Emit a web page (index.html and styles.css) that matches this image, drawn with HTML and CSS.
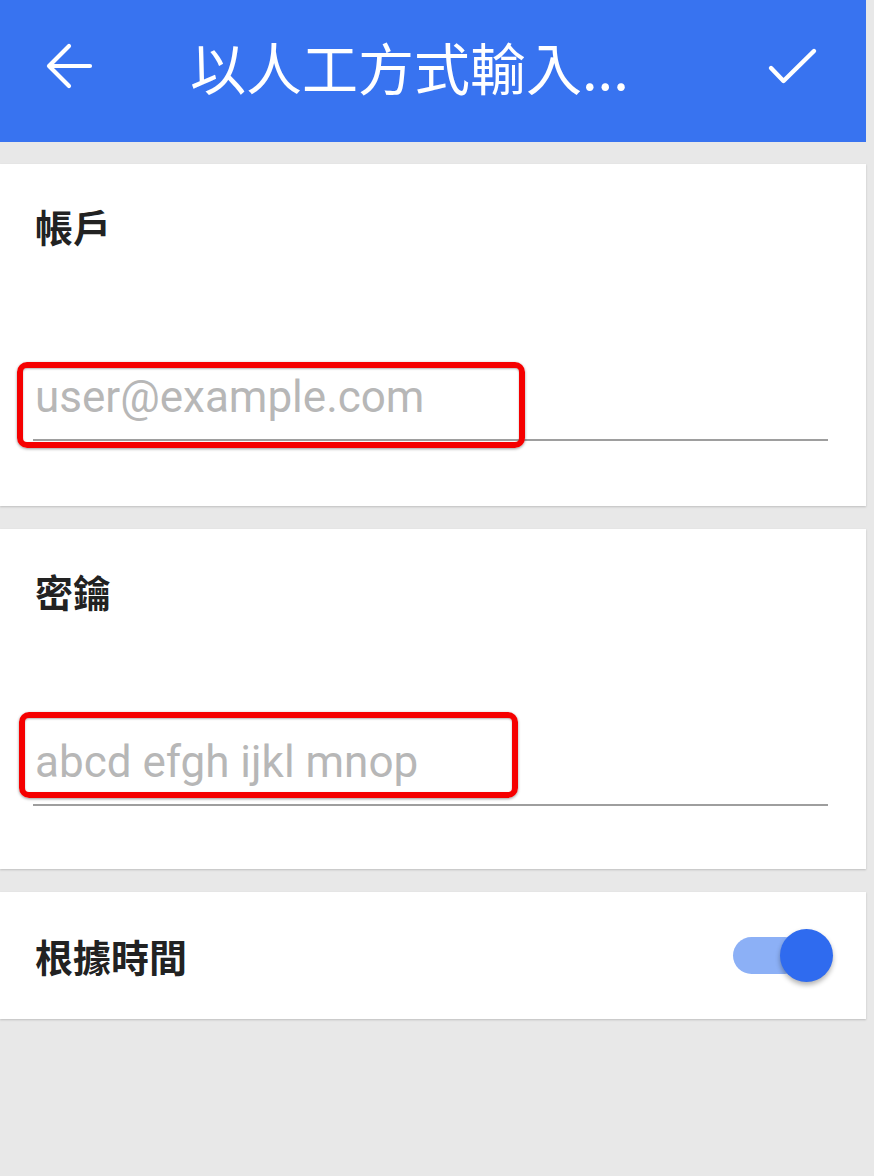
FILE: index.html
```html
<!DOCTYPE html>
<html lang="zh-Hant">
<head>
  <meta charset="UTF-8" />
  <meta name="viewport" content="width=device-width, initial-scale=1" />
  <title>以人工方式輸入帳戶</title>
  <link rel="stylesheet" href="styles.css">
</head>
<body>
  <div class="screen">
    <header class="appbar">
      <svg class="icon-back" width="48" height="48" viewBox="0 0 48 48" aria-label="返回">
        <path d="M45 24H4M24 4L4 24l20 20" fill="none" stroke="#fff" stroke-width="4.2" stroke-linecap="round" stroke-linejoin="round" />
      </svg>
      <h1 class="title">以人工方式輸入...</h1>
      <svg class="icon-done" width="52" height="40" viewBox="0 0 52 40" aria-label="完成">
        <path d="M5 22l12.5 13L48 5" fill="none" stroke="#fff" stroke-width="4.4" stroke-linecap="round" stroke-linejoin="round" />
      </svg>
    </header>

    <main class="content">
      <section class="card field-card">
        <label class="card-label" for="account">帳戶</label>
        <div class="field">
          <input id="account" type="email" placeholder="user@example.com" />
          <span class="mark mark-account"></span>
        </div>
      </section>

      <section class="card field-card field-card-secret">
        <label class="card-label" for="secret">密鑰</label>
        <div class="field">
          <input id="secret" type="text" placeholder="abcd efgh ijkl mnop" />
          <span class="mark mark-secret"></span>
        </div>
      </section>

      <section class="card toggle-card">
        <span class="card-label">根據時間</span>
        <span class="switch" role="switch" aria-checked="true">
          <span class="switch-track"></span>
          <span class="switch-knob"></span>
        </span>
      </section>
    </main>
  </div>
</body>
</html>
```

FILE: styles.css
```css
* {
  margin: 0;
  padding: 0;
  box-sizing: border-box;
}
body {
  background: #e8e8e8;
  font-family: Roboto, "Noto Sans CJK TC", sans-serif;
  color: #212121;
}
.screen {
  width: 866px;
  min-height: 1176px;
}
.appbar {
  height: 142px;
  background: #3873f0;
  display: flex;
  align-items: center;
  padding: 0 48px 10px 45px;
  color: #fff;
}
.title {
  flex: 1;
  margin-left: 97px;
  font: 400 56px/1 "Noto Sans CJK TC", sans-serif;
  white-space: nowrap;
}
.content {
  padding-top: 22px;
  display: flex;
  flex-direction: column;
  gap: 23px;
}
.card {
  background: #fff;
  box-shadow: 0 1px 2px rgba(0,0,0,0.18);
}
.card-label {
  display: block;
  font: 700 38px/38px "Noto Sans CJK TC", sans-serif;
  color: #222;
}
.field-card {
  height: 342px;
  padding: 43px 38px 0 35px;
}
.field-card-secret {
  height: 340px;
}
.field {
  position: relative;
  margin: 127px 0 0 -2px;
  width: 795px;
}
.field input {
  display: block;
  width: 100%;
  height: 69px;
  padding: 0 0 17px 2px;
  border: none;
  border-bottom: 2px solid #9e9e9e;
  outline: none;
  background: transparent;
  font: 400 44px/50px Roboto, sans-serif;
  color: #212121;
}
.field input::placeholder {
  color: #b7b7b7;
}
/* red annotation boxes drawn over the inputs */
.mark {
  position: absolute;
  border: 6px solid #f50000;
  border-radius: 10px;
  box-shadow: 0 1px 3px rgba(0,0,0,0.4), inset 0 1px 2px rgba(0,0,0,0.3);
  pointer-events: none;
}
.mark-account {
  left: -16px;
  top: -10px;
  width: 508px;
  height: 86px;
}
.mark-secret {
  left: -14px;
  top: -25px;
  width: 499px;
  height: 86px;
}
.toggle-card {
  height: 127px;
  display: flex;
  align-items: center;
  justify-content: space-between;
  padding: 0 33px 0 35px;
}
.switch {
  position: relative;
  width: 100px;
  height: 53px;
}
.switch-track {
  position: absolute;
  left: 0;
  top: 8px;
  width: 70px;
  height: 37px;
  border-radius: 19px;
  background: #8cb0f6;
}
.switch-knob {
  position: absolute;
  right: 0;
  top: 0;
  width: 53px;
  height: 53px;
  border-radius: 50%;
  background: #2f6bef;
  box-shadow: 0 3px 5px rgba(0,0,0,0.3);
}
```
